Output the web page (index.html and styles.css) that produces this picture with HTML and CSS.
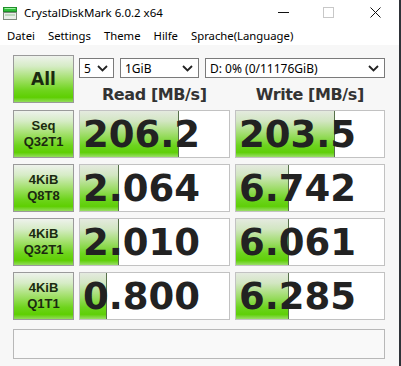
FILE: index.html
```html
<!DOCTYPE html>
<html lang="de">
<head>
    <meta charset="UTF-8">
    <title>CrystalDiskMark 6.0.2 x64</title>
    <link rel="stylesheet" href="styles.css">
</head>
<body>

<div class="window">
    <div class="titlebar">
        <svg class="app-icon" width="14" height="13" viewBox="0 0 14 13">
            <rect x="0.5" y="0.5" width="13" height="4" fill="#2fbf3a" stroke="#1f8f2a"/>
            <rect x="1.5" y="1" width="11" height="1" fill="#9ef0a0"/>
            <rect x="0.5" y="5.5" width="13" height="7" fill="#e8eee8" stroke="#7d8a7d"/>
            <rect x="2" y="7" width="10" height="2" fill="#bcd8bc"/>
        </svg>
        <span class="title">CrystalDiskMark 6.0.2 x64</span>
        <div class="controls">
            <svg class="ctl ctl-min" width="12" height="11" viewBox="0 0 12 11"><line x1="0" y1="5.5" x2="11" y2="5.5" stroke="#111" stroke-width="1"/></svg>
            <svg class="ctl ctl-max" width="12" height="11" viewBox="0 0 12 11"><rect x="0.5" y="0.5" width="10" height="10" fill="none" stroke="#c8c8c8" stroke-width="1"/></svg>
            <svg class="ctl ctl-close" width="12" height="11" viewBox="0 0 12 11"><path d="M0.5 0.5 L10.5 10.5 M10.5 0.5 L0.5 10.5" stroke="#111" stroke-width="1"/></svg>
        </div>
    </div>

    <div class="menubar">
        <span>Datei</span>
        <span>Settings</span>
        <span>Theme</span>
        <span>Hilfe</span>
        <span>Sprache(Language)</span>
    </div>

    <div class="main">
        <div class="top">
            <div class="btn btn-all">All</div>
            <div class="settings">
                <div class="selects">
                    <div class="select sel-count"><span>5</span><svg width="11" height="7" viewBox="0 0 11 7"><path d="M1 1 L5.5 5.5 L10 1" fill="none" stroke="#222" stroke-width="1.8"/></svg></div>
                    <div class="select sel-size"><span>1GiB</span><svg width="11" height="7" viewBox="0 0 11 7"><path d="M1 1 L5.5 5.5 L10 1" fill="none" stroke="#222" stroke-width="1.8"/></svg></div>
                    <div class="select sel-drive"><span>D: 0% (0/11176GiB)</span><svg width="11" height="7" viewBox="0 0 11 7"><path d="M1 1 L5.5 5.5 L10 1" fill="none" stroke="#222" stroke-width="1.8"/></svg></div>
                </div>
                <div class="heads">
                    <div class="head">Read [MB/s]</div>
                    <div class="head">Write [MB/s]</div>
                </div>
            </div>
        </div>

        <div class="row">
            <div class="btn btn-label">Seq<br>Q32T1</div>
            <div class="value"><div class="bar" style="width: 99px"></div><span class="num">206.2</span></div>
            <div class="value"><div class="bar" style="width: 99px"></div><span class="num">203.5</span></div>
        </div>
        <div class="row">
            <div class="btn btn-label">4KiB<br>Q8T8</div>
            <div class="value"><div class="bar" style="width: 39px"></div><span class="num">2.064</span></div>
            <div class="value"><div class="bar" style="width: 53px"></div><span class="num">6.742</span></div>
        </div>
        <div class="row">
            <div class="btn btn-label">4KiB<br>Q32T1</div>
            <div class="value"><div class="bar" style="width: 39px"></div><span class="num">2.010</span></div>
            <div class="value"><div class="bar" style="width: 53px"></div><span class="num">6.061</span></div>
        </div>
        <div class="row">
            <div class="btn btn-label">4KiB<br>Q1T1</div>
            <div class="value"><div class="bar" style="width: 27px"></div><span class="num">0.800</span></div>
            <div class="value"><div class="bar" style="width: 53px"></div><span class="num">6.285</span></div>
        </div>

        <div class="comment"></div>
    </div>
</div>

</body>
</html>
```

FILE: styles.css
```css
body {
    margin: 0;
    font-family: "Noto Sans", "Segoe UI", sans-serif;
    background: #ffffff;
}
.window {
    width: 399px;
    height: 366px;
    border-right: 2px solid #2e3238;
    background: #f7f7f7;
    overflow: hidden;
}
.titlebar {
    height: 25px;
    background: #fff;
    display: flex;
    align-items: center;
}
.app-icon {
    margin-left: 3px;
    margin-top: 1px;
}
.title {
    margin-left: 7px;
    font-size: 11.5px;
    color: #000;
}
.controls {
    margin-left: auto;
    display: flex;
    align-items: center;
}
.ctl {
    display: block;
}
.ctl-min {
    margin-right: 33px;
}
.ctl-max {
    margin-right: 35px;
}
.ctl-close {
    margin-right: 17px;
}
.menubar {
    height: 20px;
    background: #fff;
    display: flex;
    align-items: center;
    gap: 13px;
    padding-left: 7px;
    font-size: 11.3px;
    color: #000;
}
.main {
    padding: 10px 0 0 13px;
}
.top {
    display: flex;
    gap: 5px;
}
.btn {
    box-sizing: border-box;
    width: 61px;
    height: 48px;
    border: 1px solid #9a9a9a;
    background: linear-gradient(#eef2ec 0%, #d6ecc6 22%, #a2e06a 50%, #6ed41c 75%, #5ecf02 90%, #93dc5c 100%);
    display: flex;
    align-items: center;
    justify-content: center;
    text-align: center;
    color: #1b2a10;
    font-family: "DejaVu Sans", sans-serif;
    font-weight: bold;
}
.btn-all {
    font-size: 17px;
}
.btn-label {
    font-family: "Liberation Sans", sans-serif;
    font-size: 13px;
    line-height: 16px;
}
.settings {
    width: 306px;
}
.selects {
    display: flex;
    gap: 6px;
    margin-top: 3px;
}
.select {
    box-sizing: border-box;
    height: 20px;
    border: 1px solid #7a7a7a;
    background: #fff;
    display: flex;
    align-items: center;
    justify-content: space-between;
    padding: 0 5px 0 4px;
    font-size: 12px;
    color: #000;
}
.sel-count {
    width: 35px;
}
.sel-size {
    width: 79px;
}
.sel-drive {
    width: 180px;
}
.heads {
    display: flex;
    gap: 5px;
    margin-top: 7px;
}
.head {
    width: 151px;
    text-align: center;
    font-family: "DejaVu Sans", sans-serif;
    font-weight: bold;
    font-size: 16px;
    letter-spacing: -0.4px;
    color: #333;
}
.row {
    display: flex;
    gap: 5px;
    margin-top: 6px;
}
.value {
    position: relative;
    box-sizing: border-box;
    width: 151px;
    height: 48px;
    border: 1px solid #c2c2c2;
    background: #fff;
    display: flex;
    align-items: center;
}
.value + .value {
    width: 150px;
}
.bar {
    position: absolute;
    left: 0;
    top: 0;
    bottom: 0;
    box-sizing: border-box;
    border-right: 1px solid #56704a;
    background: linear-gradient(#e4eadf 0%, #d2e6c2 22%, #a0dd6c 50%, #6cd41e 75%, #5fcf08 90%, #9ade68 100%);
}
.num {
    position: relative;
    padding-left: 3px;
    font-family: "DejaVu Sans", sans-serif;
    font-weight: bold;
    font-size: 37px;
    line-height: 1;
    color: #222;
}
.comment {
    box-sizing: border-box;
    width: 372px;
    height: 30px;
    margin-top: 9px;
    border: 1px solid #b8b8b8;
    background: #f9f9f9;
}
```
